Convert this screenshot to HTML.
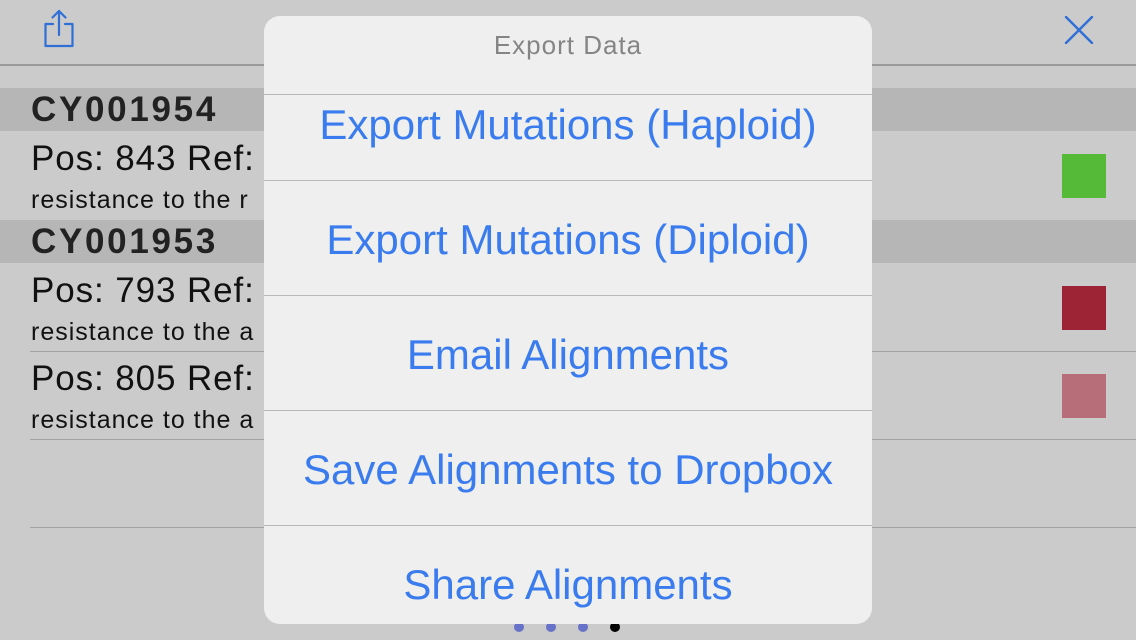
<!DOCTYPE html>
<html><head><meta charset="utf-8"><style>
*{margin:0;padding:0;box-sizing:border-box}
body{width:1136px;height:640px;background:#cbcbcb;position:relative;overflow:hidden;font-family:"Liberation Sans",sans-serif}
.a{position:absolute;white-space:nowrap}
.hl{position:absolute;height:1px;background:#a2a2a2}
.band{position:absolute;left:0;width:1136px;height:43px;background:#b6b6b6}
.big{font-size:35px;color:#111;letter-spacing:0.9px}
.sm{font-size:25px;color:#111;letter-spacing:1px}
.hd{font-size:35px;font-weight:bold;color:#222;line-height:40px;letter-spacing:2.7px}
.sq{position:absolute;left:1062px;width:44px;height:44px}
.modal{position:absolute;left:264px;top:16px;width:608px;height:608px;background:#efefef;border-radius:16px;overflow:hidden}
.it{position:absolute;left:0;width:608px;text-align:center;font-size:42px;color:#3a7cf0;line-height:46px}
.sep{position:absolute;left:0;width:608px;height:1px;background:#b8b8b8}
.dot{position:absolute;top:622px;width:10px;height:10px;border-radius:50%;background:#6673c8}
</style></head><body>
<svg class="a" style="left:42px;top:9px" width="34" height="40" viewBox="0 0 34 40"><g fill="none" stroke="#2f6fd6" stroke-width="2.2" stroke-linecap="round" stroke-linejoin="round"><path d="M11 15H3.5v22h27V15H23"/><path d="M17 2v24"/><path d="M10.5 8.5L17 2l6.5 6.5"/></g></svg>
<svg class="a" style="left:1064px;top:16px" width="30" height="28" viewBox="0 0 30 28"><g stroke="#2f6fd6" stroke-width="2.4" stroke-linecap="round"><path d="M2 1l26 26M28 1L2 27"/></g></svg>
<div class="hl" style="left:0;top:64px;width:1136px;height:2px;background:#9a9a9a"></div>
<div class="band" style="top:88px"></div>
<div class="a hd" style="left:31px;top:90px">CY001954</div>
<div class="a big" style="left:31px;top:139px;line-height:40px">Pos: 843 Ref:</div>
<div class="a sm" style="left:31px;top:186px;line-height:28px">resistance to the r</div>
<div class="sq" style="top:154px;background:#54ba37"></div>
<div class="band" style="top:220px"></div>
<div class="a hd" style="left:31px;top:222px">CY001953</div>
<div class="a big" style="left:31px;top:271px;line-height:40px">Pos: 793 Ref:</div>
<div class="a sm" style="left:31px;top:318px;line-height:28px">resistance to the a</div>
<div class="hl" style="left:30px;top:351px;width:1106px"></div>
<div class="sq" style="top:286px;background:#9d2434"></div>
<div class="a big" style="left:31px;top:359px;line-height:40px">Pos: 805 Ref:</div>
<div class="a sm" style="left:31px;top:406px;line-height:28px">resistance to the a</div>
<div class="hl" style="left:30px;top:439px;width:1106px"></div>
<div class="sq" style="top:374px;background:#b86e78"></div>
<div class="hl" style="left:30px;top:527px;width:1106px"></div>
<div class="dot" style="left:514px"></div>
<div class="dot" style="left:546px"></div>
<div class="dot" style="left:578px"></div>
<div class="dot" style="left:610px;background:#000"></div>
<div class="modal">
<div class="it" style="top:12px;font-size:26px;color:#858585;line-height:34px;letter-spacing:1px">Export Data</div>
<div class="sep" style="top:78px"></div>
<div class="it" style="top:86px">Export Mutations (Haploid)</div>
<div class="sep" style="top:164px"></div>
<div class="it" style="top:201px">Export Mutations (Diploid)</div>
<div class="sep" style="top:279px"></div>
<div class="it" style="top:316px">Email Alignments</div>
<div class="sep" style="top:394px"></div>
<div class="it" style="top:431px">Save Alignments to Dropbox</div>
<div class="sep" style="top:509px"></div>
<div class="it" style="top:546px">Share Alignments</div>
</div>
</body></html>
